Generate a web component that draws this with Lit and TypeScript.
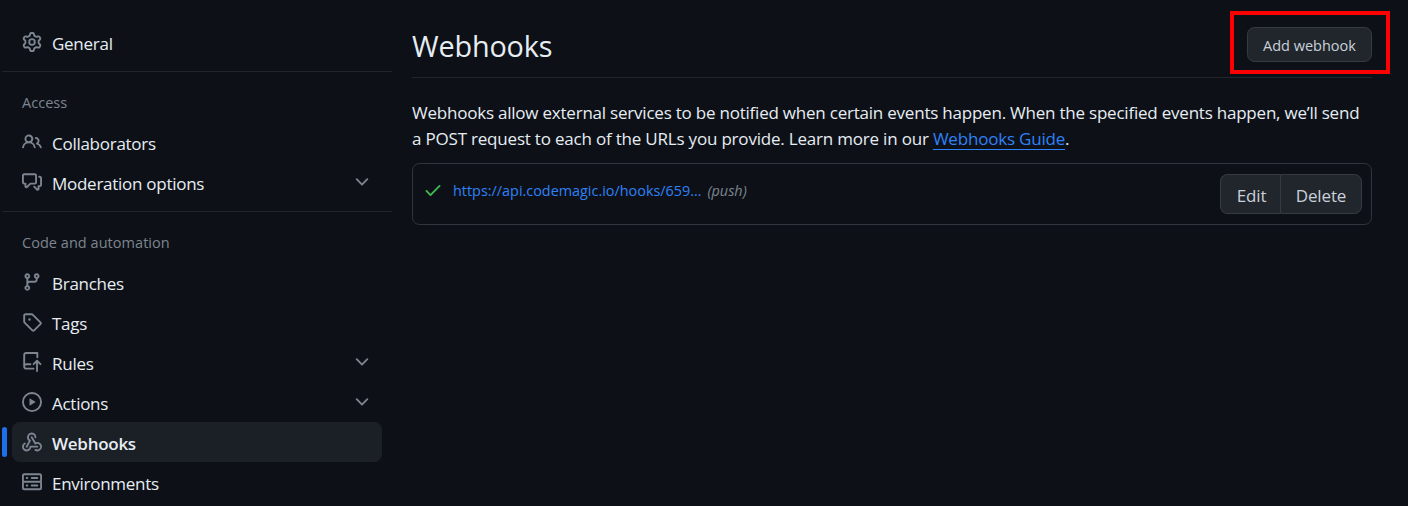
import { LitElement, html, css, svg, nothing } from "lit";
import { customElement } from "lit/decorators.js";
import { classMap } from "lit/directives/class-map.js";

const ICONS: Record<string, string> = {
  gear: "M8 0a8.2 8.2 0 0 1 .701.031C9.444.095 9.99.645 10.16 1.29l.288 1.107c.018.066.079.158.212.224.231.114.454.243.668.386.123.082.233.09.299.071l1.103-.303c.644-.176 1.392.021 1.82.63.27.385.506.792.704 1.218.315.675.111 1.422-.364 1.891l-.814.806c-.049.048-.098.147-.088.294.016.257.016.515 0 .772-.01.147.038.246.088.294l.814.806c.475.469.679 1.216.364 1.891a7.977 7.977 0 0 1-.704 1.217c-.428.61-1.176.807-1.82.63l-1.102-.302c-.067-.019-.177-.011-.3.071a5.909 5.909 0 0 1-.668.386c-.133.066-.194.158-.211.224l-.29 1.106c-.168.646-.715 1.196-1.458 1.26a8.006 8.006 0 0 1-1.402 0c-.743-.064-1.289-.614-1.458-1.26l-.289-1.106c-.018-.066-.079-.158-.212-.224a5.738 5.738 0 0 1-.668-.386c-.123-.082-.233-.09-.299-.071l-1.103.303c-.644.176-1.392-.021-1.82-.63a8.12 8.12 0 0 1-.704-1.218c-.315-.675-.111-1.422.363-1.891l.815-.806c.05-.048.098-.147.088-.294a6.214 6.214 0 0 1 0-.772c.01-.147-.038-.246-.088-.294l-.815-.806C.635 6.045.431 5.298.746 4.623a7.92 7.92 0 0 1 .704-1.217c.428-.61 1.176-.807 1.82-.63l1.102.302c.067.019.177.011.3-.071.214-.143.437-.272.668-.386.133-.066.194-.158.211-.224l.29-1.106C6.009.645 6.556.095 7.299.03 7.53.01 7.764 0 8 0Zm-.571 1.525c-.036.003-.108.036-.137.146l-.289 1.105c-.147.561-.549.967-.998 1.189-.173.086-.34.183-.5.29-.417.278-.97.423-1.529.27l-1.103-.303c-.109-.03-.175.016-.195.045-.22.312-.412.644-.573.99-.014.031-.021.11.059.19l.815.806c.411.406.562.957.53 1.456a4.709 4.709 0 0 0 0 .582c.032.499-.119 1.05-.53 1.456l-.815.806c-.081.08-.073.159-.059.19.162.346.353.677.573.989.02.03.085.076.195.046l1.102-.303c.56-.153 1.113-.008 1.53.27.161.107.328.204.501.29.447.222.85.629.997 1.189l.289 1.105c.029.109.101.143.137.146a6.6 6.6 0 0 0 1.142 0c.036-.003.108-.036.137-.146l.289-1.105c.147-.561.549-.967.998-1.189.173-.086.34-.183.5-.29.417-.278.97-.423 1.529-.27l1.103.303c.109.029.175-.016.195-.045.22-.313.411-.644.573-.99.014-.031.021-.11-.059-.19l-.815-.806c-.411-.406-.562-.957-.53-1.456a4.709 4.709 0 0 0 0-.582c-.032-.499.119-1.05.53-1.456l.815-.806c.081-.08.073-.159.059-.19a6.464 6.464 0 0 0-.573-.989c-.02-.03-.085-.076-.195-.046l-1.102.303c-.56.153-1.113.008-1.53-.27a4.44 4.44 0 0 0-.501-.29c-.447-.222-.85-.629-.997-1.189l-.289-1.105c-.029-.11-.101-.143-.137-.146a6.6 6.6 0 0 0-1.142 0ZM11 8a3 3 0 1 1-6 0 3 3 0 0 1 6 0ZM9.5 8a1.5 1.5 0 1 0-3.001.001A1.5 1.5 0 0 0 9.5 8Z",
  people: "M2 5.5a3.5 3.5 0 1 1 5.898 2.549 5.508 5.508 0 0 1 3.034 4.084.75.75 0 1 1-1.482.235 4 4 0 0 0-7.9 0 .75.75 0 0 1-1.482-.236A5.507 5.507 0 0 1 3.102 8.05 3.493 3.493 0 0 1 2 5.5ZM11 4a3.001 3.001 0 0 1 2.22 5.018 5.01 5.01 0 0 1 2.56 3.012.749.749 0 0 1-.885.954.752.752 0 0 1-.549-.514 3.507 3.507 0 0 0-2.522-2.372.75.75 0 0 1-.574-.73v-.352a.75.75 0 0 1 .416-.672A1.5 1.5 0 0 0 11 5.5.75.75 0 0 1 11 4Zm-5.5-.5a2 2 0 1 0-.001 3.999A2 2 0 0 0 5.5 3.5Z",
  discussion: "M1.75 1h8.5c.966 0 1.75.784 1.75 1.75v5.5A1.75 1.75 0 0 1 10.25 10H7.061l-2.574 2.573A1.458 1.458 0 0 1 2 11.543V10h-.25A1.75 1.75 0 0 1 0 8.25v-5.5C0 1.784.784 1 1.75 1ZM1.5 2.75v5.5c0 .138.112.25.25.25h1a.75.75 0 0 1 .75.75v2.19l2.72-2.72a.749.749 0 0 1 .53-.22h3.5a.25.25 0 0 0 .25-.25v-5.5a.25.25 0 0 0-.25-.25h-8.5a.25.25 0 0 0-.25.25Zm13 2a.25.25 0 0 0-.25-.25h-.5a.75.75 0 0 1 0-1.5h.5c.966 0 1.75.784 1.75 1.75v5.5A1.75 1.75 0 0 1 14.25 12H14v1.543a1.458 1.458 0 0 1-2.487 1.03L9.22 12.28a.749.749 0 0 1 .326-1.275.749.749 0 0 1 .734.215l2.22 2.22v-2.19a.75.75 0 0 1 .75-.75h1a.25.25 0 0 0 .25-.25Z",
  branch: "M9.5 3.25a2.25 2.25 0 1 1 3 2.122V6A2.5 2.5 0 0 1 10 8.5H6a1 1 0 0 0-1 1v1.128a2.251 2.251 0 1 1-1.5 0V5.372a2.25 2.25 0 1 1 1.5 0v1.836A2.493 2.493 0 0 1 6 7h4a1 1 0 0 0 1-1v-.628A2.25 2.25 0 0 1 9.5 3.25Zm-6 0a.75.75 0 1 0 1.5 0 .75.75 0 0 0-1.5 0Zm8.25-.75a.75.75 0 1 0 0 1.5.75.75 0 0 0 0-1.5ZM4.25 12a.75.75 0 1 0 0 1.5.75.75 0 0 0 0-1.5Z",
  tag: "M1 7.775V2.75C1 1.784 1.784 1 2.75 1h5.025c.464 0 .91.184 1.238.513l6.25 6.25a1.75 1.75 0 0 1 0 2.474l-5.026 5.026a1.75 1.75 0 0 1-2.474 0l-6.25-6.25A1.752 1.752 0 0 1 1 7.775Zm1.5 0c0 .066.026.13.073.177l6.25 6.25a.25.25 0 0 0 .354 0l5.025-5.025a.25.25 0 0 0 0-.354l-6.25-6.25a.25.25 0 0 0-.177-.073H2.75a.25.25 0 0 0-.25.25ZM6 5a1 1 0 1 1 0 2 1 1 0 0 1 0-2Z",
  repoPush: "M1 2.5A2.5 2.5 0 0 1 3.5 0h8.75a.75.75 0 0 1 .75.75v3.5a.75.75 0 0 1-1.5 0V1.5h-8a1 1 0 0 0-1 1v6.708A2.493 2.493 0 0 1 3.5 9h3.25a.75.75 0 0 1 0 1.5H3.5a1 1 0 0 0 0 2h5.75a.75.75 0 0 1 0 1.5H3.5A2.5 2.5 0 0 1 1 11.5Zm13.23 7.79-1.48-1.48v6.44a.75.75 0 0 1-1.5 0V8.81L9.78 10.28a.751.751 0 0 1-1.042-.018.751.751 0 0 1-.018-1.042l2.75-2.75a.75.75 0 0 1 1.06 0l2.75 2.75a.749.749 0 0 1-.326 1.275.749.749 0 0 1-.734-.215Z",
  play: "M8 0a8 8 0 1 1 0 16A8 8 0 0 1 8 0ZM1.5 8a6.5 6.5 0 1 0 13 0 6.5 6.5 0 0 0-13 0Zm4.879-2.773 4.264 2.559a.25.25 0 0 1 0 .428l-4.264 2.559A.25.25 0 0 1 6 10.559V5.442a.25.25 0 0 1 .379-.215Z",
  webhook: "M5.5 4.25a2.25 2.25 0 0 1 4.5 0 .75.75 0 0 0 1.5 0 3.75 3.75 0 1 0-6.14 2.889l-2.272 4.258a.75.75 0 0 0 1.324.706L7 7.25a.75.75 0 0 0-.309-1.015A2.25 2.25 0 0 1 5.5 4.25ZM7.364 3.607a.75.75 0 0 1 1.03.257l2.608 4.349a3.75 3.75 0 1 1-.628 6.785.75.75 0 0 1 .752-1.299 2.25 2.25 0 1 0-.033-3.88.75.75 0 0 1-1.03-.256L7.107 4.636a.75.75 0 0 1 .257-1.03ZM2.9 8.776A.75.75 0 0 1 2.625 9.8 2.25 2.25 0 1 0 6 11.75a.75.75 0 0 1 .75-.751h5.5a.75.75 0 0 1 0 1.5H7.425a3.751 3.751 0 1 1-5.55-3.998.75.75 0 0 1 1.024.274Z",
  server: "M1.75 1h12.5c.966 0 1.75.784 1.75 1.75v4c0 .372-.116.717-.314 1 .198.283.314.628.314 1v4a1.75 1.75 0 0 1-1.75 1.75H1.75A1.75 1.75 0 0 1 0 12.75v-4c0-.358.109-.707.314-1a1.739 1.739 0 0 1-.314-1v-4C0 1.784.784 1 1.75 1ZM1.5 2.75v4c0 .138.112.25.25.25h12.5a.25.25 0 0 0 .25-.25v-4a.25.25 0 0 0-.25-.25H1.75a.25.25 0 0 0-.25.25Zm.25 5.75a.25.25 0 0 0-.25.25v4c0 .138.112.25.25.25h12.5a.25.25 0 0 0 .25-.25v-4a.25.25 0 0 0-.25-.25ZM7 4.75A.75.75 0 0 1 7.75 4h4.5a.75.75 0 0 1 0 1.5h-4.5A.75.75 0 0 1 7 4.75ZM7.75 10h4.5a.75.75 0 0 1 0 1.5h-4.5a.75.75 0 0 1 0-1.5ZM3 4.75A.75.75 0 0 1 3.75 4h.5a.75.75 0 0 1 0 1.5h-.5A.75.75 0 0 1 3 4.75ZM3.75 10h.5a.75.75 0 0 1 0 1.5h-.5a.75.75 0 0 1 0-1.5Z",
  chevron: "M12.78 5.22a.749.749 0 0 1 0 1.06l-4.25 4.25a.749.749 0 0 1-1.06 0L3.22 6.28a.749.749 0 1 1 1.06-1.06L8 8.939l3.72-3.719a.749.749 0 0 1 1.06 0Z",
  check: "M13.78 4.22a.75.75 0 0 1 0 1.06l-7.25 7.25a.75.75 0 0 1-1.06 0L2.22 9.28a.751.751 0 0 1 .018-1.042.751.751 0 0 1 1.042-.018L6 10.94l6.72-6.72a.75.75 0 0 1 1.06 0Z",
};

const icon = (name: string) => html`<svg class="icon" viewBox="0 0 16 16" aria-hidden="true">${svg`<path d=${ICONS[name]}></path>`}</svg>`;

interface Item { label: string; icon: string; expandable?: boolean; current?: boolean }
interface Section { title?: string; items: Item[] }

const SECTIONS: Section[] = [
  { items: [{ label: "General", icon: "gear" }] },
  {
    title: "Access",
    items: [
      { label: "Collaborators", icon: "people" },
      { label: "Moderation options", icon: "discussion", expandable: true },
    ],
  },
  {
    title: "Code and automation",
    items: [
      { label: "Branches", icon: "branch" },
      { label: "Tags", icon: "tag" },
      { label: "Rules", icon: "repoPush", expandable: true },
      { label: "Actions", icon: "play", expandable: true },
      { label: "Webhooks", icon: "webhook", current: true },
      { label: "Environments", icon: "server" },
    ],
  },
];

@customElement("settings-nav")
export class SettingsNav extends LitElement {
  static styles = css`
    :host { display: block; width: 390px; margin-left: 2px; padding-top: 22px; box-sizing: border-box; letter-spacing: -0.27px; }
    .section + .section { border-top: 1px solid #21262d; margin-top: 9px; padding-top: 10px; }
    .title { height: 40px; line-height: 41px; padding-left: 20px; font-size: 14.5px; font-weight: 500; letter-spacing: 0.04px; color: #7d8590; }
    .row { position: relative; display: flex; align-items: center; height: 40px; margin: 0 10px; padding: 0 10px; border-radius: 7.5px; box-sizing: border-box; }
    .row.current { background: #1b1f26; font-weight: 600; }
    .row.current::before { content: ""; position: absolute; left: -10px; top: 5px; width: 5px; height: 30px; border-radius: 4px; background: #1f6feb; }
    .icon { width: 20px; height: 20px; fill: #7d8590; flex: none; }
    .label { flex: 1; margin-left: 10px; padding-top: 3px; line-height: 26px; }
  `;

  render() {
    return html`${SECTIONS.map((s) => html`
      <div class="section">
        ${s.title ? html`<div class="title">${s.title}</div>` : nothing}
        ${s.items.map((i) => html`
          <div class=${classMap({ row: true, current: !!i.current })}>
            ${icon(i.icon)}<span class="label">${i.label}</span>
            ${i.expandable ? icon("chevron") : nothing}
          </div>`)}
      </div>`)}`;
  }
}

@customElement("app-root")
export class AppRoot extends LitElement {
  static styles = css`
    :host { display: flex; width: 1408px; height: 506px; overflow: hidden; background: #0d1117; color: #e6edf3; font: 17px "Open Sans", "Noto Sans", sans-serif; }
    .main { width: 960px; margin-left: 20px; }
    .header { display: flex; justify-content: space-between; height: 77px; border-bottom: 1px solid #21262d; }
    h1 { margin: 27px 0 0; font-size: 28.8px; line-height: 38px; font-weight: 400; letter-spacing: -0.16px; }
    .btn { box-sizing: border-box; display: flex; align-items: center; justify-content: center; background: #21262d; border: 1px solid #363b42; border-radius: 7.5px; color: #c9d1d9; white-space: nowrap; }
    .add { position: relative; width: 125px; height: 35px; margin-top: 27px; padding-top: 2px; font-size: 14.5px; }
    .marker { position: absolute; left: -18px; top: -17px; width: 160px; height: 63px; box-sizing: border-box; border: 4px solid #ff0000; }
    .intro { margin: 22px 0 10px; line-height: 26.25px; }
    .line { display: block; white-space: nowrap; }
    .l1 { letter-spacing: -0.22px; }
    .l2 { letter-spacing: -0.2px; }
    a { color: #2f81f7; text-decoration: none; }
    .guide { text-decoration: underline; text-underline-offset: 4px; text-decoration-thickness: 1px; }
    .hook { box-sizing: border-box; display: flex; height: 62px; padding: 10px 9px 0 10px; border: 1px solid #30363d; border-radius: 7.5px; font-size: 14.4px; white-space: nowrap; }
    .icon { width: 20px; height: 20px; fill: #3fb950; margin-top: 6px; }
    .url { margin-left: 10px; line-height: 34px; }
    .event { margin-left: 6px; line-height: 34px; font-style: italic; color: #7d8590; }
    .group { display: flex; margin-left: auto; font-size: 17px; letter-spacing: -0.15px; }
    .group .btn { height: 40px; padding-top: 3px; }
    .edit { width: 60px; padding-left: 2px; border-radius: 7.5px 0 0 7.5px; border-right: 0; }
    .delete { width: 82px; border-radius: 0 7.5px 7.5px 0; }
  `;

  render() {
    return html`
      <settings-nav></settings-nav>
      <div class="main">
        <div class="header">
          <h1>Webhooks</h1>
          <div class="btn add">Add webhook<span class="marker"></span></div>
        </div>
        <div class="intro">
          <span class="line l1">Webhooks allow external services to be notified when certain events happen. When the specified events happen, we’ll send</span>
          <span class="line l2">a POST request to each of the URLs you provide. Learn more in our <a class="guide">Webhooks Guide</a>.</span>
        </div>
        <div class="hook">
          ${icon("check")}
          <a class="url">https://api.codemagic.io/hooks/659…</a>
          <span class="event">(push)</span>
          <div class="group"><div class="btn edit">Edit</div><div class="btn delete">Delete</div></div>
        </div>
      </div>`;
  }
}
